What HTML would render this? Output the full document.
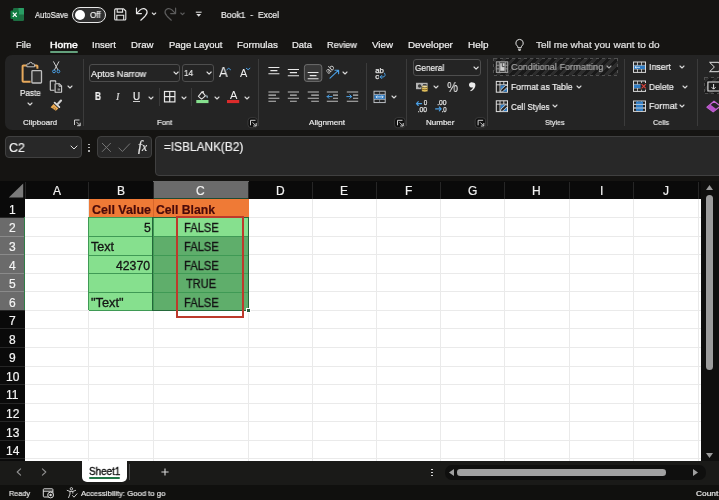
<!DOCTYPE html>
<html><head><meta charset="utf-8"><title>Book1 - Excel</title>
<style>
html,body{margin:0;padding:0;}
body{width:719px;height:500px;overflow:hidden;background:#151412;position:relative;font-family:"Liberation Sans",sans-serif;}
.t{position:absolute;white-space:pre;display:block;transform-origin:0 50%;will-change:transform;-webkit-text-stroke-width:0.2px;}
.r{position:absolute;box-sizing:border-box;display:block;}
</style></head><body>
<svg class="r" style="left:10px;top:7px;" width="15" height="15" viewBox="0 0 15 15" fill="none"><rect x="3" y="1" width="11" height="13" rx="1.2" fill="#1d6f42"/><rect x="8.5" y="1" width="5.5" height="6.5" fill="#33c481" opacity=".55"/><rect x="0.5" y="3.5" width="8.5" height="8.5" rx="1" fill="#107c41"/><path d="M2.8 5.6 L6.7 9.9 M6.7 5.6 L2.8 9.9" stroke="#fff" stroke-width="1.2"/></svg>
<span class="t" style="left:35.00px;top:9.90px;font-size:8.5px;line-height:10.20px;transform:scaleX(0.8953);color:#f0f0f0;">AutoSave</span>
<div class="r" style="left:72.3px;top:6.8px;width:33.7px;height:16.0px;background:#2e2e2e;border:1px solid #e8e8e8;border-radius:9px;"></div>
<div class="r" style="left:74.7px;top:9.6px;width:10.399999999999991px;height:10.4px;background:#ffffff;border-radius:50%;"></div>
<span class="t" style="left:89.60px;top:9.80px;font-size:8.5px;line-height:10.20px;transform:scaleX(0.9480);color:#f0f0f0;">Off</span>
<span class="t" style="left:221.00px;top:9.72px;font-size:8.8px;line-height:10.56px;transform:scaleX(0.9800);color:#f0f0f0;">Book1  -  Excel</span>
<span class="t" style="left:15.50px;top:39.46px;font-size:9.4px;line-height:11.28px;transform:scaleX(0.9903);color:#f0f0f0;">File</span>
<span class="t" style="left:49.70px;top:39.46px;font-size:9.4px;line-height:11.28px;transform:scaleX(1.1087);color:#ffffff;-webkit-text-stroke:0.45px #fff;">Home</span>
<div class="r" style="left:49.7px;top:51.1px;width:27.89999999999999px;height:1.7999999999999972px;background:#63a07c;border-radius:1px;"></div>
<span class="t" style="left:92.00px;top:39.46px;font-size:9.4px;line-height:11.28px;transform:scaleX(1.0209);color:#f0f0f0;">Insert</span>
<span class="t" style="left:131.00px;top:39.46px;font-size:9.4px;line-height:11.28px;transform:scaleX(1.0258);color:#f0f0f0;">Draw</span>
<span class="t" style="left:168.50px;top:39.46px;font-size:9.4px;line-height:11.28px;transform:scaleX(1.0135);color:#f0f0f0;">Page Layout</span>
<span class="t" style="left:237.00px;top:39.46px;font-size:9.4px;line-height:11.28px;transform:scaleX(1.0466);color:#f0f0f0;">Formulas</span>
<span class="t" style="left:292.00px;top:39.46px;font-size:9.4px;line-height:11.28px;transform:scaleX(1.0073);color:#f0f0f0;">Data</span>
<span class="t" style="left:327.00px;top:39.46px;font-size:9.4px;line-height:11.28px;transform:scaleX(0.9734);color:#f0f0f0;">Review</span>
<span class="t" style="left:372.00px;top:39.46px;font-size:9.4px;line-height:11.28px;transform:scaleX(1.0394);color:#f0f0f0;">View</span>
<span class="t" style="left:407.50px;top:39.46px;font-size:9.4px;line-height:11.28px;transform:scaleX(1.0503);color:#f0f0f0;">Developer</span>
<span class="t" style="left:467.50px;top:39.46px;font-size:9.4px;line-height:11.28px;transform:scaleX(1.0604);color:#f0f0f0;">Help</span>
<svg class="r" style="left:514px;top:37.6px;" width="11.1" height="13.9" viewBox="0 0 12 15" fill="none"><path d="M6 1.5 a4 4 0 0 1 2.4 7.2 c-.5 .5 -.6 1 -.6 1.8 h-3.6 c0 -.8 -.1 -1.3 -.6 -1.8 A4 4 0 0 1 6 1.5 z" stroke="#e6e6e6" stroke-width="1.05"/><path d="M4.4 12.2 h3.2 M4.9 13.7 h2.2" stroke="#e6e6e6" stroke-width="1.05"/></svg>
<span class="t" style="left:536.00px;top:39.46px;font-size:9.4px;line-height:11.28px;transform:scaleX(1.0690);color:#e0e0e0;">Tell me what you want to do</span>
<div class="r" style="left:5px;top:54.5px;width:725px;height:75.0px;background:#242424;border-radius:7px 0 0 7px;"></div>
<div class="r" style="left:83px;top:59px;width:1px;height:67px;background:#3b3b3b;"></div>
<div class="r" style="left:258.3px;top:59px;width:1.0px;height:67px;background:#3b3b3b;"></div>
<div class="r" style="left:366px;top:62.5px;width:1px;height:47.0px;background:#3b3b3b;"></div>
<div class="r" style="left:406.3px;top:59px;width:1.0px;height:67px;background:#3b3b3b;"></div>
<div class="r" style="left:487px;top:59px;width:1px;height:67px;background:#3b3b3b;"></div>
<div class="r" style="left:624.3px;top:59px;width:1.0px;height:67px;background:#3b3b3b;"></div>
<div class="r" style="left:697.2px;top:59px;width:1.0px;height:67px;background:#3b3b3b;"></div>
<span class="t" style="left:19.70px;top:87.66px;font-size:8.4px;line-height:10.08px;transform:scaleX(0.9683);color:#f0f0f0;">Paste</span>
<svg class="r" style="left:26.6px;top:102.2px;" width="6" height="4" viewBox="0 0 6 4" fill="none"><path d="M1 1 L3.0 3 L5 1" stroke="#d8d8d8" stroke-width="1.1" stroke-linecap="round" stroke-linejoin="round"/></svg>
<svg class="r" style="left:67.2px;top:85.0px;" width="6" height="4" viewBox="0 0 6 4" fill="none"><path d="M1 1 L3.0 3 L5 1" stroke="#d8d8d8" stroke-width="1.1" stroke-linecap="round" stroke-linejoin="round"/></svg>
<span class="t" style="left:22.70px;top:117.50px;font-size:8px;line-height:9.60px;transform:scaleX(0.9958);color:#e8e8e8;">Clipboard</span>
<span class="t" style="left:156.70px;top:117.70px;font-size:8px;line-height:9.60px;transform:scaleX(0.9558);color:#e8e8e8;">Font</span>
<span class="t" style="left:309.00px;top:117.50px;font-size:8px;line-height:9.60px;transform:scaleX(1.0120);color:#e8e8e8;">Alignment</span>
<span class="t" style="left:426.10px;top:117.50px;font-size:8px;line-height:9.60px;transform:scaleX(0.9981);color:#e8e8e8;">Number</span>
<span class="t" style="left:545.40px;top:118.20px;font-size:8px;line-height:9.60px;transform:scaleX(0.8997);color:#e8e8e8;">Styles</span>
<span class="t" style="left:652.70px;top:117.90px;font-size:8px;line-height:9.60px;transform:scaleX(0.9054);color:#e8e8e8;">Cells</span>
<div class="r" style="left:89.3px;top:64px;width:91.2px;height:17.799999999999997px;background:#242424;border:1px solid #4e4e4e;border-radius:3px;"></div>
<span class="t" style="left:91.00px;top:68.58px;font-size:9.2px;line-height:11.04px;transform:scaleX(0.9905);color:#f0f0f0;">Aptos Narrow</span>
<svg class="r" style="left:172.9px;top:71.4px;" width="6.2" height="4.2" viewBox="0 0 6.2 4.2" fill="none"><path d="M1 1 L3.1 3.2 L5.2 1" stroke="#e0e0e0" stroke-width="1.1" stroke-linecap="round" stroke-linejoin="round"/></svg>
<div class="r" style="left:182.2px;top:64px;width:31.600000000000023px;height:17.799999999999997px;background:#242424;border:1px solid #4e4e4e;border-radius:3px;"></div>
<span class="t" style="left:184.40px;top:68.42px;font-size:9.3px;line-height:11.16px;transform:scaleX(0.8604);color:#f0f0f0;">14</span>
<span class="t" style="left:219.10px;top:65.02px;font-size:13.8px;line-height:16.56px;transform:scaleX(0.9452);color:#f0f0f0;-webkit-text-stroke-width:0;">A</span>
<span class="t" style="left:239.90px;top:67.06px;font-size:10.9px;line-height:13.08px;transform:scaleX(0.9766);color:#f0f0f0;-webkit-text-stroke-width:0;">A</span>
<span class="t" style="left:229.70px;top:89.86px;font-size:10.4px;line-height:12.48px;transform:scaleX(1.0668);color:#f0f0f0;-webkit-text-stroke-width:0;">A</span>
<svg class="r" style="left:206.3px;top:71.4px;" width="6.2" height="4.2" viewBox="0 0 6.2 4.2" fill="none"><path d="M1 1 L3.1 3.2 L5.2 1" stroke="#e0e0e0" stroke-width="1.1" stroke-linecap="round" stroke-linejoin="round"/></svg>
<span class="t" style="left:95.20px;top:91.16px;font-size:10.4px;line-height:12.48px;transform:scaleX(0.7989);color:#f0f0f0;font-weight:bold;">B</span>
<span class="t" style="left:115.60px;top:91.16px;font-size:10.4px;line-height:12.48px;transform:scaleX(1.0000);color:#d8d8d8;font-style:italic;font-family:&quot;Liberation Serif&quot;,serif;">I</span>
<span class="t" style="left:133.20px;top:91.30px;font-size:10px;line-height:12.00px;transform:scaleX(0.9693);color:#f0f0f0;">U</span>
<div class="r" style="left:133.2px;top:101.2px;width:7.0px;height:1.0px;background:#d0d0d0;"></div>
<svg class="r" style="left:148.4px;top:95.7px;" width="6" height="4" viewBox="0 0 6 4" fill="none"><path d="M1 1 L3.0 3 L5 1" stroke="#d8d8d8" stroke-width="1.1" stroke-linecap="round" stroke-linejoin="round"/></svg>
<div class="r" style="left:158.8px;top:88.3px;width:1.0px;height:17.400000000000006px;background:#3b3b3b;"></div>
<div class="r" style="left:191px;top:88.3px;width:1px;height:17.400000000000006px;background:#3b3b3b;"></div>
<svg class="r" style="left:181.1px;top:95.7px;" width="6" height="4" viewBox="0 0 6 4" fill="none"><path d="M1 1 L3.0 3 L5 1" stroke="#d8d8d8" stroke-width="1.1" stroke-linecap="round" stroke-linejoin="round"/></svg>
<svg class="r" style="left:213.7px;top:95.7px;" width="6" height="4" viewBox="0 0 6 4" fill="none"><path d="M1 1 L3.0 3 L5 1" stroke="#d8d8d8" stroke-width="1.1" stroke-linecap="round" stroke-linejoin="round"/></svg>
<svg class="r" style="left:244.2px;top:95.7px;" width="6" height="4" viewBox="0 0 6 4" fill="none"><path d="M1 1 L3.0 3 L5 1" stroke="#d8d8d8" stroke-width="1.1" stroke-linecap="round" stroke-linejoin="round"/></svg>
<svg class="r" style="left:342.4px;top:71.3px;" width="6" height="4" viewBox="0 0 6 4" fill="none"><path d="M1 1 L3.0 3 L5 1" stroke="#d8d8d8" stroke-width="1.1" stroke-linecap="round" stroke-linejoin="round"/></svg>
<svg class="r" style="left:391.0px;top:95.0px;" width="6" height="4" viewBox="0 0 6 4" fill="none"><path d="M1 1 L3.0 3 L5 1" stroke="#d8d8d8" stroke-width="1.1" stroke-linecap="round" stroke-linejoin="round"/></svg>
<div class="r" style="left:413px;top:59px;width:67.80000000000001px;height:16.599999999999994px;background:#242424;border:1px solid #4e4e4e;border-radius:3px;"></div>
<span class="t" style="left:414.70px;top:62.72px;font-size:9.3px;line-height:11.16px;transform:scaleX(0.8856);color:#f0f0f0;">General</span>
<svg class="r" style="left:473.4px;top:65.5px;" width="6.2" height="4.2" viewBox="0 0 6.2 4.2" fill="none"><path d="M1 1 L3.1 3.2 L5.2 1" stroke="#e0e0e0" stroke-width="1.1" stroke-linecap="round" stroke-linejoin="round"/></svg>
<svg class="r" style="left:433.1px;top:84.8px;" width="6" height="4" viewBox="0 0 6 4" fill="none"><path d="M1 1 L3.0 3 L5 1" stroke="#d8d8d8" stroke-width="1.1" stroke-linecap="round" stroke-linejoin="round"/></svg>
<span class="t" style="left:447.20px;top:78.10px;font-size:15px;line-height:18.00px;transform:scaleX(0.8248);color:#f0f0f0;-webkit-text-stroke-width:0;">%</span>
<div class="r" style="left:493.5px;top:58.2px;width:124.5px;height:17.200000000000003px;border-radius:2px;background:repeating-linear-gradient(135deg,#2d2d2d 0 3.2px,#191919 3.2px 6.4px);"></div>
<div class="r" style="left:493.5px;top:58px;width:124.5px;height:1px;background:repeating-linear-gradient(90deg,#505050 0 3px,transparent 3px 6px);"></div>
<div class="r" style="left:493.5px;top:74.8px;width:124.5px;height:1.0px;background:repeating-linear-gradient(90deg,#505050 0 3px,transparent 3px 6px);"></div>
<div class="r" style="left:493.2px;top:58px;width:1.0px;height:17.799999999999997px;background:repeating-linear-gradient(180deg,#505050 0 3px,transparent 3px 6px);"></div>
<div class="r" style="left:617.4px;top:58px;width:1.0px;height:17.799999999999997px;background:repeating-linear-gradient(180deg,#505050 0 3px,transparent 3px 6px);"></div>
<span class="t" style="left:511.00px;top:61.44px;font-size:9.6px;line-height:11.52px;transform:scaleX(0.9557);color:#a6a6a6;">Conditional Formatting</span>
<svg class="r" style="left:605.5px;top:65.0px;" width="6" height="4" viewBox="0 0 6 4" fill="none"><path d="M1 1 L3.0 3 L5 1" stroke="#a6a6a6" stroke-width="1.1" stroke-linecap="round" stroke-linejoin="round"/></svg>
<span class="t" style="left:511.40px;top:81.34px;font-size:9.6px;line-height:11.52px;transform:scaleX(0.8973);color:#f0f0f0;">Format as Table</span>
<svg class="r" style="left:575.6px;top:84.6px;" width="6" height="4" viewBox="0 0 6 4" fill="none"><path d="M1 1 L3.0 3 L5 1" stroke="#d8d8d8" stroke-width="1.1" stroke-linecap="round" stroke-linejoin="round"/></svg>
<span class="t" style="left:511.40px;top:100.74px;font-size:9.6px;line-height:11.52px;transform:scaleX(0.8512);color:#f0f0f0;">Cell Styles</span>
<svg class="r" style="left:552.0px;top:104.0px;" width="6" height="4" viewBox="0 0 6 4" fill="none"><path d="M1 1 L3.0 3 L5 1" stroke="#d8d8d8" stroke-width="1.1" stroke-linecap="round" stroke-linejoin="round"/></svg>
<div class="r" style="left:704.8px;top:77.6px;width:20.200000000000045px;height:16.0px;border-radius:2px;background:repeating-linear-gradient(135deg,#2d2d2d 0 3.2px,#191919 3.2px 6.4px);"></div>
<div class="r" style="left:704.8px;top:77.4px;width:20.200000000000045px;height:1.0px;background:repeating-linear-gradient(90deg,#505050 0 3px,transparent 3px 6px);"></div>
<div class="r" style="left:704.8px;top:93px;width:20.200000000000045px;height:1px;background:repeating-linear-gradient(90deg,#505050 0 3px,transparent 3px 6px);"></div>
<div class="r" style="left:704.4px;top:77.4px;width:1.0px;height:16.599999999999994px;background:repeating-linear-gradient(180deg,#505050 0 3px,transparent 3px 6px);"></div>
<span class="t" style="left:648.70px;top:61.34px;font-size:9.6px;line-height:11.52px;transform:scaleX(0.9163);color:#f0f0f0;">Insert</span>
<svg class="r" style="left:679.1px;top:65.4px;" width="6" height="4" viewBox="0 0 6 4" fill="none"><path d="M1 1 L3.0 3 L5 1" stroke="#d8d8d8" stroke-width="1.1" stroke-linecap="round" stroke-linejoin="round"/></svg>
<span class="t" style="left:648.70px;top:80.84px;font-size:9.6px;line-height:11.52px;transform:scaleX(0.8865);color:#f0f0f0;">Delete</span>
<svg class="r" style="left:682.0px;top:84.9px;" width="6" height="4" viewBox="0 0 6 4" fill="none"><path d="M1 1 L3.0 3 L5 1" stroke="#d8d8d8" stroke-width="1.1" stroke-linecap="round" stroke-linejoin="round"/></svg>
<span class="t" style="left:648.70px;top:100.14px;font-size:9.6px;line-height:11.52px;transform:scaleX(0.9210);color:#f0f0f0;">Format</span>
<svg class="r" style="left:679.1px;top:104.0px;" width="6" height="4" viewBox="0 0 6 4" fill="none"><path d="M1 1 L3.0 3 L5 1" stroke="#d8d8d8" stroke-width="1.1" stroke-linecap="round" stroke-linejoin="round"/></svg>
<div class="r" style="left:0px;top:129.5px;width:719px;height:51.5px;background:#151412;"></div>
<div class="r" style="left:5px;top:136px;width:77px;height:22px;background:#282828;border:1px solid #404040;border-radius:4px;"></div>
<span class="t" style="left:9.40px;top:140.42px;font-size:12.8px;line-height:15.36px;transform:scaleX(0.9656);color:#f0f0f0;">C2</span>
<svg class="r" style="left:69.5px;top:144.9px;" width="8" height="5" viewBox="0 0 8 5" fill="none"><path d="M1 1 L4.0 4 L7 1" stroke="#e0e0e0" stroke-width="1" stroke-linecap="round" stroke-linejoin="round"/></svg>
<div class="r" style="left:88.3px;top:143.5px;width:1.6000000000000085px;height:1.5999999999999943px;background:#cfcfcf;border-radius:50%;"></div>
<div class="r" style="left:88.3px;top:146.8px;width:1.6000000000000085px;height:1.5999999999999943px;background:#cfcfcf;border-radius:50%;"></div>
<div class="r" style="left:88.3px;top:150.1px;width:1.6000000000000085px;height:1.5999999999999943px;background:#cfcfcf;border-radius:50%;"></div>
<div class="r" style="left:96.5px;top:136px;width:55.5px;height:22px;background:#282828;border:1px solid #404040;border-radius:4px;"></div>
<svg class="r" style="left:101px;top:141.5px;" width="11" height="11" viewBox="0 0 11 11" fill="none"><path d="M1 1 L9.8 9.8 M9.800 1 L1 9.800" stroke="#757575" stroke-width="1"/></svg>
<svg class="r" style="left:117px;top:141.5px;" width="14" height="11" viewBox="0 0 14 11" fill="none"><path d="M1.600 5.700 L5.400 9.500 L13 1.500" stroke="#757575" stroke-width="1"/></svg>
<span class="t" style="left:137.60px;top:138.80px;font-size:14px;line-height:16.80px;transform:scaleX(1.0000);color:#e6e6e6;font-style:italic;font-family:&quot;Liberation Serif&quot;,serif;">f</span>
<span class="t" style="left:142.30px;top:141.30px;font-size:11.5px;line-height:13.80px;transform:scaleX(1.0000);color:#e6e6e6;font-style:italic;font-family:&quot;Liberation Serif&quot;,serif;">x</span>
<div class="r" style="left:155px;top:136px;width:575px;height:40px;background:#282828;border:1px solid #404040;border-radius:4px;"></div>
<span class="t" style="left:164.00px;top:140.44px;font-size:12.6px;line-height:15.12px;transform:scaleX(0.9397);color:#f0f0f0;">=ISBLANK(B2)</span>
<div class="r" style="left:0px;top:181px;width:701.2px;height:18px;background:#0a0a0a;"></div>
<div class="r" style="left:0px;top:199px;width:25px;height:261.5px;background:#0a0a0a;"></div>
<div class="r" style="left:0px;top:217.47px;width:25px;height:92.85px;background:#6b6b6b;"></div>
<div class="r" style="left:25px;top:199px;width:676.2px;height:261.5px;background:#ffffff;"></div>
<div class="r" style="left:153px;top:181px;width:96px;height:17.400000000000006px;background:#6b6b6b;"></div>
<div class="r" style="left:153px;top:198.3px;width:96px;height:1.0px;background:#1f4a30;"></div>
<div class="r" style="left:25px;top:182px;width:1px;height:17px;background:#262626;"></div>
<div class="r" style="left:88px;top:182px;width:1px;height:17px;background:#262626;"></div>
<div class="r" style="left:153px;top:182px;width:1px;height:17px;background:#262626;"></div>
<div class="r" style="left:248px;top:182px;width:1px;height:17px;background:#262626;"></div>
<div class="r" style="left:312px;top:182px;width:1px;height:17px;background:#262626;"></div>
<div class="r" style="left:376px;top:182px;width:1px;height:17px;background:#262626;"></div>
<div class="r" style="left:440px;top:182px;width:1px;height:17px;background:#262626;"></div>
<div class="r" style="left:504px;top:182px;width:1px;height:17px;background:#262626;"></div>
<div class="r" style="left:569px;top:182px;width:1px;height:17px;background:#262626;"></div>
<div class="r" style="left:633px;top:182px;width:1px;height:17px;background:#262626;"></div>
<div class="r" style="left:698px;top:182px;width:1px;height:17px;background:#262626;"></div>
<svg class="r" style="left:8px;top:183px;" width="16" height="15" viewBox="0 0 16 15" fill="none"><path d="M15.2 0.4 V14.4 H0.8 Z" fill="#7a7a7a"/></svg>
<span class="t" style="left:52.75px;top:184.20px;font-size:12px;line-height:14.40px;transform:scaleX(1.0000);color:#f0f0f0;">A</span>
<span class="t" style="left:116.75px;top:184.20px;font-size:12px;line-height:14.40px;transform:scaleX(1.0000);color:#f0f0f0;">B</span>
<span class="t" style="left:196.42px;top:184.20px;font-size:12px;line-height:14.40px;transform:scaleX(1.0000);color:#f0f0f0;">C</span>
<span class="t" style="left:275.92px;top:184.20px;font-size:12px;line-height:14.40px;transform:scaleX(1.0000);color:#f0f0f0;">D</span>
<span class="t" style="left:340.25px;top:184.20px;font-size:12px;line-height:14.40px;transform:scaleX(1.0000);color:#f0f0f0;">E</span>
<span class="t" style="left:404.83px;top:184.20px;font-size:12px;line-height:14.40px;transform:scaleX(1.0000);color:#f0f0f0;">F</span>
<span class="t" style="left:467.83px;top:184.20px;font-size:12px;line-height:14.40px;transform:scaleX(1.0000);color:#f0f0f0;">G</span>
<span class="t" style="left:532.42px;top:184.20px;font-size:12px;line-height:14.40px;transform:scaleX(1.0000);color:#f0f0f0;">H</span>
<span class="t" style="left:599.58px;top:184.20px;font-size:12px;line-height:14.40px;transform:scaleX(1.0000);color:#f0f0f0;">I</span>
<span class="t" style="left:663.00px;top:184.20px;font-size:12px;line-height:14.40px;transform:scaleX(1.0000);color:#f0f0f0;">J</span>
<div class="r" style="left:88px;top:199px;width:1px;height:261.5px;background:#eaeaea;"></div>
<div class="r" style="left:153px;top:199px;width:1px;height:261.5px;background:#eaeaea;"></div>
<div class="r" style="left:248px;top:199px;width:1px;height:261.5px;background:#eaeaea;"></div>
<div class="r" style="left:312px;top:199px;width:1px;height:261.5px;background:#eaeaea;"></div>
<div class="r" style="left:376px;top:199px;width:1px;height:261.5px;background:#eaeaea;"></div>
<div class="r" style="left:440px;top:199px;width:1px;height:261.5px;background:#eaeaea;"></div>
<div class="r" style="left:504px;top:199px;width:1px;height:261.5px;background:#eaeaea;"></div>
<div class="r" style="left:569px;top:199px;width:1px;height:261.5px;background:#eaeaea;"></div>
<div class="r" style="left:633px;top:199px;width:1px;height:261.5px;background:#eaeaea;"></div>
<div class="r" style="left:698px;top:199px;width:1px;height:261.5px;background:#eaeaea;"></div>
<div class="r" style="left:25px;top:217px;width:676.2px;height:1px;background:#eaeaea;"></div>
<span class="t" style="left:9.06px;top:202.79px;font-size:12px;line-height:14.40px;transform:scaleX(1.0000);color:#f4f4f4;">1</span>
<div class="r" style="left:0px;top:217px;width:25px;height:1px;background:#262626;"></div>
<div class="r" style="left:25px;top:236px;width:676.2px;height:1px;background:#eaeaea;"></div>
<span class="t" style="left:9.06px;top:221.36px;font-size:12px;line-height:14.40px;transform:scaleX(1.0000);color:#f4f4f4;">2</span>
<div class="r" style="left:0px;top:236px;width:25px;height:1px;background:#8a8a8a;"></div>
<div class="r" style="left:25px;top:254px;width:676.2px;height:1px;background:#eaeaea;"></div>
<span class="t" style="left:9.06px;top:239.93px;font-size:12px;line-height:14.40px;transform:scaleX(1.0000);color:#f4f4f4;">3</span>
<div class="r" style="left:0px;top:254px;width:25px;height:1px;background:#8a8a8a;"></div>
<div class="r" style="left:25px;top:273px;width:676.2px;height:1px;background:#eaeaea;"></div>
<span class="t" style="left:9.06px;top:258.50px;font-size:12px;line-height:14.40px;transform:scaleX(1.0000);color:#f4f4f4;">4</span>
<div class="r" style="left:0px;top:273px;width:25px;height:1px;background:#8a8a8a;"></div>
<div class="r" style="left:25px;top:291px;width:676.2px;height:1px;background:#eaeaea;"></div>
<span class="t" style="left:9.06px;top:277.07px;font-size:12px;line-height:14.40px;transform:scaleX(1.0000);color:#f4f4f4;">5</span>
<div class="r" style="left:0px;top:291px;width:25px;height:1px;background:#8a8a8a;"></div>
<div class="r" style="left:25px;top:310px;width:676.2px;height:1px;background:#eaeaea;"></div>
<span class="t" style="left:9.06px;top:295.64px;font-size:12px;line-height:14.40px;transform:scaleX(1.0000);color:#f4f4f4;">6</span>
<div class="r" style="left:0px;top:310px;width:25px;height:1px;background:#262626;"></div>
<div class="r" style="left:25px;top:328px;width:676.2px;height:1px;background:#eaeaea;"></div>
<span class="t" style="left:9.06px;top:314.21px;font-size:12px;line-height:14.40px;transform:scaleX(1.0000);color:#f4f4f4;">7</span>
<div class="r" style="left:0px;top:328px;width:25px;height:1px;background:#262626;"></div>
<div class="r" style="left:25px;top:347px;width:676.2px;height:1px;background:#eaeaea;"></div>
<span class="t" style="left:9.06px;top:332.78px;font-size:12px;line-height:14.40px;transform:scaleX(1.0000);color:#f4f4f4;">8</span>
<div class="r" style="left:0px;top:347px;width:25px;height:1px;background:#262626;"></div>
<div class="r" style="left:25px;top:366px;width:676.2px;height:1px;background:#eaeaea;"></div>
<span class="t" style="left:9.06px;top:351.35px;font-size:12px;line-height:14.40px;transform:scaleX(1.0000);color:#f4f4f4;">9</span>
<div class="r" style="left:0px;top:366px;width:25px;height:1px;background:#262626;"></div>
<div class="r" style="left:25px;top:384px;width:676.2px;height:1px;background:#eaeaea;"></div>
<span class="t" style="left:5.73px;top:369.92px;font-size:12px;line-height:14.40px;transform:scaleX(1.0000);color:#f4f4f4;">10</span>
<div class="r" style="left:0px;top:384px;width:25px;height:1px;background:#262626;"></div>
<div class="r" style="left:25px;top:403px;width:676.2px;height:1px;background:#eaeaea;"></div>
<span class="t" style="left:6.17px;top:388.49px;font-size:12px;line-height:14.40px;transform:scaleX(1.0000);color:#f4f4f4;">11</span>
<div class="r" style="left:0px;top:403px;width:25px;height:1px;background:#262626;"></div>
<div class="r" style="left:25px;top:421px;width:676.2px;height:1px;background:#eaeaea;"></div>
<span class="t" style="left:5.73px;top:407.06px;font-size:12px;line-height:14.40px;transform:scaleX(1.0000);color:#f4f4f4;">12</span>
<div class="r" style="left:0px;top:421px;width:25px;height:1px;background:#262626;"></div>
<div class="r" style="left:25px;top:440px;width:676.2px;height:1px;background:#eaeaea;"></div>
<span class="t" style="left:5.73px;top:425.62px;font-size:12px;line-height:14.40px;transform:scaleX(1.0000);color:#f4f4f4;">13</span>
<div class="r" style="left:0px;top:440px;width:25px;height:1px;background:#262626;"></div>
<div class="r" style="left:25px;top:458px;width:676.2px;height:1px;background:#eaeaea;"></div>
<span class="t" style="left:5.73px;top:444.20px;font-size:12px;line-height:14.40px;transform:scaleX(1.0000);color:#f4f4f4;">14</span>
<div class="r" style="left:0px;top:458px;width:25px;height:1px;background:#262626;"></div>
<div class="r" style="left:24px;top:217.47px;width:1.1999999999999993px;height:92.85px;background:#2f7d46;"></div>
<div class="r" style="left:88.5px;top:199px;width:160.2px;height:18.47px;background:#ef7a36;"></div>
<div class="r" style="left:152.5px;top:199px;width:1.0px;height:18.47px;background:#d8662a;"></div>
<div class="r" style="left:88.5px;top:217.47px;width:64.5px;height:92.85px;background:#86e08e;"></div>
<div class="r" style="left:153px;top:217.47px;width:95.19999999999999px;height:92.85px;background:#5fae6b;"></div>
<div class="r" style="left:154px;top:218.47px;width:93.5px;height:17.07000000000002px;background:#86e08e;"></div>
<div class="r" style="left:88.5px;top:216.5px;width:160.0px;height:1.0px;background:#3f9a55;"></div>
<div class="r" style="left:88.5px;top:235.5px;width:160.0px;height:1.0px;background:#3f9a55;"></div>
<div class="r" style="left:88.5px;top:254.5px;width:160.0px;height:1.0px;background:#3f9a55;"></div>
<div class="r" style="left:88.5px;top:272.5px;width:160.0px;height:1.0px;background:#3f9a55;"></div>
<div class="r" style="left:88.5px;top:291.5px;width:160.0px;height:1.0px;background:#3f9a55;"></div>
<div class="r" style="left:88.5px;top:309.5px;width:160.0px;height:1.0px;background:#3f9a55;"></div>
<div class="r" style="left:87.5px;top:217.47px;width:1.0px;height:92.85px;background:#3f9a55;"></div>
<div class="r" style="left:152.5px;top:217.47px;width:1.0px;height:92.85px;background:#3f9a55;"></div>
<div class="r" style="left:247.5px;top:217.47px;width:1.0px;height:92.85px;background:#3f9a55;"></div>
<div class="r" style="left:152.3px;top:216.67px;width:96.39999999999998px;height:94.35px;border:1.3px solid #24683a;"></div>
<div class="r" style="left:245.9px;top:308.12px;width:4.099999999999994px;height:4.199999999999989px;background:#2a5e3e;border:0.8px solid #fff;box-sizing:content-box;width:3px;height:3px;"></div>
<span class="t" style="left:91.60px;top:202.79px;font-size:12px;line-height:14.40px;transform:scaleX(1.0406);color:#4a0a0a;font-weight:bold;">Cell Value</span>
<span class="t" style="left:156.00px;top:202.79px;font-size:12px;line-height:14.40px;transform:scaleX(1.0169);color:#4a0a0a;font-weight:bold;">Cell Blank</span>
<span class="t" style="left:143.69px;top:221.36px;font-size:12px;line-height:14.40px;transform:scaleX(1.0200);color:#141414;-webkit-text-stroke:0.3px #141414;">5</span>
<span class="t" style="left:91.00px;top:239.93px;font-size:12px;line-height:14.40px;transform:scaleX(1.0451);color:#141414;-webkit-text-stroke:0.3px #141414;">Text</span>
<span class="t" style="left:116.46px;top:258.50px;font-size:12px;line-height:14.40px;transform:scaleX(1.0200);color:#141414;-webkit-text-stroke:0.3px #141414;">42370</span>
<span class="t" style="left:91.00px;top:295.64px;font-size:12px;line-height:14.40px;transform:scaleX(1.0646);color:#141414;-webkit-text-stroke:0.3px #141414;">"Text"</span>
<span class="t" style="left:183.80px;top:221.36px;font-size:12px;line-height:14.40px;transform:scaleX(0.9316);color:#141414;-webkit-text-stroke:0.3px #141414;">FALSE</span>
<span class="t" style="left:183.80px;top:239.93px;font-size:12px;line-height:14.40px;transform:scaleX(0.9316);color:#141414;-webkit-text-stroke:0.3px #141414;">FALSE</span>
<span class="t" style="left:183.80px;top:258.50px;font-size:12px;line-height:14.40px;transform:scaleX(0.9316);color:#141414;-webkit-text-stroke:0.3px #141414;">FALSE</span>
<span class="t" style="left:186.00px;top:277.07px;font-size:12px;line-height:14.40px;transform:scaleX(0.9184);color:#141414;-webkit-text-stroke:0.3px #141414;">TRUE</span>
<span class="t" style="left:183.80px;top:295.64px;font-size:12px;line-height:14.40px;transform:scaleX(0.9316);color:#141414;-webkit-text-stroke:0.3px #141414;">FALSE</span>
<div class="r" style="left:176.4px;top:216.2px;width:67.69999999999999px;height:102.30000000000001px;border:2.6px solid #bd3a2c;"></div>
<div class="r" style="left:701.2px;top:181px;width:17.799999999999955px;height:279.5px;background:#0f0f0e;"></div>
<svg class="r" style="left:705px;top:184px;" width="9" height="7" viewBox="0 0 9 7" fill="none"><path d="M4.5 1 L8 6 H1 Z" fill="#9a9a9a"/></svg>
<div class="r" style="left:706px;top:195px;width:6.5px;height:175px;background:#9c9c9c;border-radius:3.5px;"></div>
<svg class="r" style="left:705px;top:451.8px;" width="9" height="7" viewBox="0 0 9 7" fill="none"><path d="M4.5 6 L8 1 H1 Z" fill="#9a9a9a"/></svg>
<div class="r" style="left:0px;top:460.5px;width:719px;height:24.0px;background:#1a1a18;"></div>
<svg class="r" style="left:15px;top:466.7px;" width="8" height="10" viewBox="0 0 8 10" fill="none"><path d="M5.6 1.800 L2.200 5 L5.600 8.200" stroke="#909090" stroke-width="1.1" stroke-linecap="round" stroke-linejoin="round"/></svg>
<svg class="r" style="left:40px;top:466.7px;" width="8" height="10" viewBox="0 0 8 10" fill="none"><path d="M2.400 1.800 L5.800 5 L2.400 8.200" stroke="#909090" stroke-width="1.1" stroke-linecap="round" stroke-linejoin="round"/></svg>
<div class="r" style="left:82.4px;top:460.5px;width:44.39999999999999px;height:21.100000000000023px;background:#ffffff;border-radius:0 0 5px 5px;"></div>
<span class="t" style="left:88.90px;top:465.12px;font-size:10.8px;line-height:12.96px;transform:scaleX(0.9144);color:#111;-webkit-text-stroke:0.4px #111;">Sheet1</span>
<div class="r" style="left:88.9px;top:477.4px;width:31.299999999999997px;height:1.8000000000000114px;background:#217346;border-radius:1px;"></div>
<div class="r" style="left:129px;top:464px;width:1px;height:16px;background:#4a4a4a;"></div>
<svg class="r" style="left:159.8px;top:466.7px;" width="10" height="10" viewBox="0 0 10 10" fill="none"><path d="M5 1.400 V8.600 M1.400 5 H8.600" stroke="#d8d8d8" stroke-width="1.1"/></svg>
<div class="r" style="left:431.4px;top:468.5px;width:1.6000000000000227px;height:1.6000000000000227px;background:#f4f4f4;border-radius:50%;"></div>
<div class="r" style="left:431.4px;top:471.7px;width:1.6000000000000227px;height:1.6000000000000227px;background:#f4f4f4;border-radius:50%;"></div>
<div class="r" style="left:431.4px;top:474.9px;width:1.6000000000000227px;height:1.6000000000000227px;background:#f4f4f4;border-radius:50%;"></div>
<div class="r" style="left:444.5px;top:465px;width:261.5px;height:15px;background:#0f0f0e;border-radius:7px;"></div>
<svg class="r" style="left:448px;top:468px;" width="7" height="9" viewBox="0 0 7 9" fill="none"><path d="M1 4.5 L6 1 V8 Z" fill="#a0a0a0"/></svg>
<div class="r" style="left:456.8px;top:469.2px;width:209.40000000000003px;height:6.400000000000034px;background:#a2a2a2;border-radius:3.3px;"></div>
<svg class="r" style="left:692px;top:468px;" width="7" height="9" viewBox="0 0 7 9" fill="none"><path d="M6 4.5 L1 1 V8 Z" fill="#a0a0a0"/></svg>
<div class="r" style="left:0px;top:484.5px;width:719px;height:15.5px;background:#10100e;"></div>
<span class="t" style="left:8.60px;top:488.80px;font-size:8px;line-height:9.60px;transform:scaleX(0.9038);color:#e8e8e8;">Ready</span>
<span class="t" style="left:80.70px;top:488.80px;font-size:8px;line-height:9.60px;transform:scaleX(0.9624);color:#e8e8e8;">Accessibility: Good to go</span>
<span class="t" style="left:696.40px;top:488.80px;font-size:8px;line-height:9.60px;transform:scaleX(1.0437);color:#e8e8e8;">Count:</span>
<svg class="r" style="left:0;top:0" width="719" height="500" viewBox="0 0 719 500" fill="none"><path d="M26.6 65.400 H23.400 a.8 .8 0 0 0 -.8 .8 V81 a.8 .8 0 0 0 .8 .8 H30.600 M34.600 65.400 H36.600 a.8 .8 0 0 1 .8 .8 V68.800" stroke="#e6a95c" stroke-width="2"/>
<path d="M26.800 66.800 V64.600 a.7 .7 0 0 1 .7 -.7 H29.100 a1.600 1.600 0 0 1 3.200 0 H33.900 a.7 .7 0 0 1 .7 .7 V66.800 Z" stroke="#c4c4c4" stroke-width="1" fill="#242424"/>
<rect x="31.900" y="70.600" width="9.600" height="12.400" rx=".8" fill="#303030" stroke="#c0c0c0" stroke-width="1.300"/>
<path d="M53.400 61.400 L58 70 M59 61.400 L54.400 70" stroke="#d0d0d0" stroke-width="1"/>
<circle cx="54" cy="71.400" r="1.400" stroke="#4aa0e6" stroke-width="1"/><circle cx="58.400" cy="71.400" r="1.400" stroke="#4aa0e6" stroke-width="1"/>
<path d="M54.500 90.200 H50.700 a.4 .4 0 0 1 -.4 -.4 V81.300 a.4 .4 0 0 1 .4 -.4 H55.300 a.4 .4 0 0 1 .4 .4 V82.800" stroke="#d2d2d2" stroke-width="1.100"/>
<path d="M55.500 83.700 H59.300 L61.600 86 V91.900 a.4 .4 0 0 1 -.4 .4 H55.500 a.4 .4 0 0 1 -.4 -.4 V84.100 a.4 .4 0 0 1 .4 -.4 Z" stroke="#d2d2d2" stroke-width="1.100"/><path d="M59 83.900 V86.300 H61.400" stroke="#d2d2d2" stroke-width=".9"/><path d="M57.600 88.400 h2.600 v2.200 h-2.600 z" fill="#8c8c8c"/>
<path d="M61 100.600 L58 103.800" stroke="#cfcfcf" stroke-width="2.200" stroke-linecap="round"/>
<path d="M54.600 102.600 L59.400 107.200" stroke="#e0e0e0" stroke-width="1.700" stroke-linecap="round"/>
<path d="M53.600 104 L50.600 107.200 L55.800 110.800 L58.400 108.400 Z" fill="#ecaa52"/>
<path d="M52.800 108.700 l1.400 -1.400 M54.600 109.900 l1.400 -1.400" stroke="#242424" stroke-width=".6"/>
<path d="M79.5 120.0 H74.5 V125.0" stroke="#cfcfcf" stroke-width="1"/><path d="M76.6 122.1 L80 125.5 M80.2 122.7 V125.7 H77.2" stroke="#cfcfcf" stroke-width="1"/>
<path d="M226.900 69.700 L228.700 68.300 L230.500 69.700" stroke="#4aa0e6" stroke-width="1" stroke-linecap="round" stroke-linejoin="round"/>
<path d="M246.300 68.300 L248.100 69.700 L249.900 68.300" stroke="#4aa0e6" stroke-width="1" stroke-linecap="round" stroke-linejoin="round"/>
<rect x="164.5" y="91.5" width="10.4" height="10.4" stroke="#e8e8e8" stroke-width="1.2"/><path d="M169.7 91.5 V101.9 M164.5 96.7 H174.9" stroke="#e8e8e8" stroke-width="1.2"/>
<path d="M202.200 91.600 L205.400 95.800 L201.600 99.200 L198.400 96.400 Z" stroke="#e2e2e2" stroke-width="1.100" stroke-linejoin="round"/><path d="M203.400 91 L203 93.400" stroke="#e2e2e2" stroke-width="1"/><path d="M206.800 94.600 q1.500 2 .7 3.600 q-1.700 -.6 -.7 -3.600" fill="#b8d4e4"/>
<rect x="196.3" y="100" width="12.2" height="3.1" fill="#86e08e"/>
<rect x="227" y="100" width="12.2" height="3.1" fill="#dc2b2b"/>
<rect x="248" y="117.7" width="9.4" height="10" rx="3" fill="#101010" stroke="#484848" stroke-width=".7"/>
<path d="M255.5 120.3 H250.5 V125.3" stroke="#cfcfcf" stroke-width="1"/><path d="M252.6 122.39999999999999 L256 125.8 M256.2 123.0 V126.0 H253.2" stroke="#cfcfcf" stroke-width="1"/>
<path d="M268.4 67.5 H279.4 M270.4 70.6 H277.4 M268.4 73.7 H279.4 " stroke="#e8e8e8" stroke-width="1.1"/>
<path d="M287.8 69.5 H299 M289.8 72.6 H297 M287.8 75.7 H299 " stroke="#e8e8e8" stroke-width="1.1"/>
<rect x="304.4" y="64.6" width="17.4" height="16.8" rx="2.5" fill="#383838" stroke="#6e6e6e" stroke-width="1"/>
<path d="M307.7 72.5 H318.5 M309.7 75.6 H316.5 M307.7 78.7 H318.5 " stroke="#e8e8e8" stroke-width="1.1"/>
<path d="M268.4 92 H279.4 M268.4 95.1 H276 M268.4 98.2 H279.4 M268.4 101.3 H276 " stroke="#bdbdbd" stroke-width="1.1"/>
<path d="M287.8 92 H299 M290 95.1 H296.8 M287.8 98.2 H299 M290 101.3 H296.8 " stroke="#bdbdbd" stroke-width="1.1"/>
<path d="M307.7 92 H318.9 M311.2 95.1 H318.9 M307.7 98.2 H318.9 M311.2 101.3 H318.9 " stroke="#bdbdbd" stroke-width="1.1"/>
<path d="M326.8 92 H338 M333 95.1 H338 M333 98.2 H338 M326.8 101.3 H338 " stroke="#bdbdbd" stroke-width="1.1"/>
<path d="M332 96.6 H327.2 M329 94.8 L327.2 96.6 L329 98.4" stroke="#4aa0e6" stroke-width="1" stroke-linecap="round" stroke-linejoin="round"/>
<path d="M346.8 92 H358.2 M353 95.1 H358.2 M353 98.2 H358.2 M346.8 101.3 H358.2 " stroke="#bdbdbd" stroke-width="1.1"/>
<path d="M346.8 96.6 H351.6 M349.8 94.8 L351.6 96.6 L349.8 98.4" stroke="#4aa0e6" stroke-width="1" stroke-linecap="round" stroke-linejoin="round"/>
<path d="M330 78.2 L338.4 70.4 M335 70.2 H338.6 V73.8" stroke="#4aa0e6" stroke-width="1.1" stroke-linecap="round" stroke-linejoin="round"/>
<text x="0" y="0" transform="translate(328.6 74.2) rotate(-45)" font-family="Liberation Sans, sans-serif" font-size="8" fill="#e0e0e0">ab</text>
<text x="375.2" y="73.4" font-family="Liberation Sans, sans-serif" font-size="7.8" fill="#e6e6e6" stroke="#e6e6e6" stroke-width=".25">ab</text><text x="375.2" y="79.2" font-family="Liberation Sans, sans-serif" font-size="7.8" fill="#e6e6e6" stroke="#e6e6e6" stroke-width=".25">c</text>
<path d="M384.6 73.2 q1.6 3.4 -1.6 3.8 H380.2 M381.8 75.4 L380.2 77 L381.8 78.6" stroke="#4aa0e6" stroke-width="1" stroke-linecap="round" stroke-linejoin="round"/>
<rect x="374" y="91.200" width="11.200" height="11.400" stroke="#c8ccd2" stroke-width=".9"/>
<rect x="374.400" y="94.600" width="10.400" height="4.600" fill="#2f7cc4"/><path d="M376 96.900 H383.200 M377.300 95.600 L376 96.900 L377.300 98.200 M381.900 95.600 L383.200 96.900 L381.900 98.200" stroke="#e8f2ff" stroke-width=".8"/>
<path d="M374 94.400 H385.200 M374 99.400 H385.200" stroke="#c8ccd2" stroke-width=".7"/><path d="M379.600 91.200 V94.400 M379.600 99.400 V102.600" stroke="#9aa0a8" stroke-width=".7"/>
<rect x="394.6" y="117.7" width="10.4" height="10" rx="3" fill="#101010" stroke="#484848" stroke-width=".7"/>
<path d="M402.5 120.3 H397.5 V125.3" stroke="#cfcfcf" stroke-width="1"/><path d="M399.6 122.39999999999999 L403 125.8 M403.2 123.0 V126.0 H400.2" stroke="#cfcfcf" stroke-width="1"/>
<rect x="416" y="82.800" width="11.6" height="6.4" fill="#b4b4b4"/><circle cx="419.6" cy="86" r="1.700" fill="#3a3a3a"/><path d="M423 84.500 h3.500" stroke="#3a3a3a" stroke-width=".9"/>
<path d="M421.700 86.600 h6.200 v4.300 a3.100 1.100 0 0 1 -6.200 0 Z" fill="#e9c660" stroke="#242424" stroke-width=".6"/><ellipse cx="424.800" cy="86.600" rx="3.100" ry="1.100" fill="#f8e29a" stroke="#242424" stroke-width=".5"/><path d="M421.700 88.600 a3.100 1.100 0 0 0 6.200 0" stroke="#6a4e10" stroke-width=".7"/>
<path d="M472.700 82.400 a2.700 2.700 0 0 1 2.700 2.900 c0 2.600 -1.800 4.700 -4.600 6 l-.6 -.9 c1.700 -1 2.600 -2 2.800 -3.200 a2.700 2.700 0 1 1 -.3 -4.800 Z" fill="#ececec"/>
<text x="423.7" y="105.4" font-family="Liberation Sans, sans-serif" font-size="7.3" fill="#e2e2e2" stroke="#e2e2e2" stroke-width=".25" textLength="3.5" lengthAdjust="spacingAndGlyphs">0</text>
<text x="417.7" y="111.6" font-family="Liberation Sans, sans-serif" font-size="7.3" fill="#e2e2e2" stroke="#e2e2e2" stroke-width=".25" textLength="9.4" lengthAdjust="spacingAndGlyphs">.00</text>
<path d="M421.600 103.600 H416.400 M418.300 101.700 L416.400 103.600 L418.300 105.500" stroke="#4aa0e6" stroke-width="1.100" stroke-linecap="round" stroke-linejoin="round"/>
<text x="437.2" y="105.4" font-family="Liberation Sans, sans-serif" font-size="7.3" fill="#e2e2e2" stroke="#e2e2e2" stroke-width=".25" textLength="9.4" lengthAdjust="spacingAndGlyphs">.00</text>
<text x="441.7" y="111.6" font-family="Liberation Sans, sans-serif" font-size="7.3" fill="#e2e2e2" stroke="#e2e2e2" stroke-width=".25" textLength="5" lengthAdjust="spacingAndGlyphs">.0</text>
<path d="M435.600 108.900 H441.200 M439.300 107 L441.200 108.900 L439.300 110.800" stroke="#4aa0e6" stroke-width="1.100" stroke-linecap="round" stroke-linejoin="round"/>
<rect x="475.2" y="117.7" width="10.4" height="10" rx="3" fill="#101010" stroke="#484848" stroke-width=".7"/>
<path d="M483.1 120.3 H478.1 V125.3" stroke="#cfcfcf" stroke-width="1"/><path d="M480.20000000000005 122.39999999999999 L483.6 125.8 M483.8 123.0 V126.0 H480.8" stroke="#cfcfcf" stroke-width="1"/>
<rect x="496.3" y="61.800" width="11.4" height="10.600" stroke="#a4a4a4" stroke-width="1" fill="#3a3a3a"/><path d="M499.400 61.800 V72.400 M505.300 61.800 V72.400 M496.300 65.300 H499.400 M496.300 68.800 H499.400 M505.300 65.300 H507.700 M505.300 68.800 H507.700" stroke="#a4a4a4" stroke-width=".8"/><path d="M500.200 63.200 H504.600 V70.800 H500.200 Z" fill="#d0d0d0"/><path d="M502.300 63.200 V66.600 H504.600" stroke="#3a3a3a" stroke-width=".9"/>
<rect x="496.3" y="81.4" width="11.2" height="10.8" stroke="#e0e0e0" stroke-width="1"/><path d="M496.3 84.80000000000001 H507.5 M500 81.4 V92.2 M503.8 81.4 V84.80000000000001" stroke="#e0e0e0" stroke-width=".9"/>
<path d="M500.6 85.4 H507 V91.7 H500.6 Z" fill="#2f7cc4"/>
<path d="M500.2 92.2 L501 89.60000000000001 L506 85.0 L507.8 86.80000000000001 L502.8 91.60000000000001 Z" fill="#242424" stroke="#e0e0e0" stroke-width=".8" stroke-linejoin="round"/>
<rect x="496.3" y="100.8" width="11.2" height="10.8" stroke="#e0e0e0" stroke-width="1"/><path d="M496.3 104.2 H507.5 M500 100.8 V111.6 M503.8 100.8 V104.2" stroke="#e0e0e0" stroke-width=".9"/>
<path d="M500.6 104.8 H507 V111.1 H500.6 Z" fill="#2f7cc4"/>
<path d="M500.2 111.6 L501 109.0 L506 104.39999999999999 L507.8 106.2 L502.8 111.0 Z" fill="#242424" stroke="#e0e0e0" stroke-width=".8" stroke-linejoin="round"/>
<rect x="633.5" y="62" width="12" height="10.4" stroke="#d8d8d8" stroke-width="1"/><path d="M633.5 65.4 H645.5 M633.5 69 H645.5 M637.5 62 V72.4 M641.5 62 V72.4" stroke="#d8d8d8" stroke-width=".8"/>
<rect x="634" y="65.6" width="11" height="3.4" fill="#2f7cc4"/><path d="M640 67.3 H635 M636.4 66 L635 67.3 L636.4 68.6" stroke="#e8f2ff" stroke-width=".8"/>
<rect x="633.5" y="81" width="12" height="10.4" stroke="#d8d8d8" stroke-width="1"/><path d="M633.5 84.4 H645.5 M633.5 88 H645.5 M637.5 81 V91.4 M641.5 81 V91.4" stroke="#d8d8d8" stroke-width=".8"/>
<rect x="634" y="84.6" width="7" height="3.4" fill="#2f7cc4"/><rect x="640.6" y="83" width="6" height="6.6" fill="#242424"/><path d="M641.6 84.2 L645.8 88.4 M645.8 84.2 L641.6 88.4" stroke="#e0443e" stroke-width="1.1"/>
<rect x="633.5" y="101" width="12" height="10.4" stroke="#d8d8d8" stroke-width="1"/><path d="M633.5 104.4 H645.5 M633.5 108 H645.5 M637.5 101 V111.4 M641.5 101 V111.4" stroke="#d8d8d8" stroke-width=".8"/>
<rect x="636" y="101.5" width="7" height="9.4" fill="#2f7cc4"/><path d="M633.5 104.4 H645.5 M633.5 108 H645.5" stroke="#d8d8d8" stroke-width=".8"/>
<path d="M718.500 63.200 V62.300 H709.600 L714.400 67 L709.600 71.700 H718.500 V70.800" stroke="#e6e6e6" stroke-width="1" stroke-linejoin="round"/>
<path d="M720 82 H707.900 V91 H720" stroke="#e4e4e4" stroke-width="1.1" fill="#1c1c1c"/><path d="M713.600 84 V89 M711.600 87.200 L713.600 89.200 L715.600 87.200" stroke="#e4e4e4" stroke-width="1"/>
<path d="M707 107.200 L714 101.200 L720.500 106.200 L713.200 111.800 Z" stroke="#c86ad8" stroke-width="1.2" stroke-linejoin="round"/><path d="M707 107.200 L710.300 104.400 L716.600 109.200 L713.200 111.800 Z" fill="#b653c8"/>
<rect x="43.3" y="488.8" width="9.6" height="8.2" rx=".8" stroke="#dcdcdc" stroke-width="1"/><path d="M43.3 491.2 H52.9" stroke="#dcdcdc" stroke-width="1"/><circle cx="50.6" cy="495" r="2.9" fill="#10100e" stroke="#dcdcdc" stroke-width="1"/><circle cx="50.6" cy="495" r="1.2" fill="#dcdcdc"/>
<circle cx="71.4" cy="488.8" r="1.2" stroke="#dcdcdc" stroke-width=".9"/><path d="M67.2 490.4 L70 491.4 H72.8 L75.6 490.4 M70 491.4 V494 L68.6 497.6 M72.8 491.4 V493.2" stroke="#dcdcdc" stroke-width=".9" stroke-linecap="round" stroke-linejoin="round"/><path d="M72.6 495.6 L74 497.2 L77 493.8" stroke="#dcdcdc" stroke-width=".9" stroke-linecap="round" stroke-linejoin="round"/>
<path d="M136.5 8.2 V13.6 H141.4" stroke="#e8e8e8" stroke-width="1.2" stroke-linecap="round" stroke-linejoin="round"/><path d="M136.7 13.4 L140.2 9.9 C142.6 7.6 146 8.4 146.9 11 C147.6 13.2 146.4 14.8 145 16.2 L140.8 20.2" stroke="#e8e8e8" stroke-width="1.2" stroke-linecap="round"/>
<path d="M175.6 8.2 V13.6 H170.7" stroke="#5c5c5c" stroke-width="1.2" stroke-linecap="round" stroke-linejoin="round"/><path d="M175.4 13.4 L171.9 9.9 C169.500 7.6 166.1 8.4 165.2 11 C164.500 13.2 165.7 14.8 167.1 16.2 L171.3 20.2" stroke="#5c5c5c" stroke-width="1.2" stroke-linecap="round"/>
<path d="M152.3 13 L154 14.7 L155.7 13" stroke="#e0e0e0" stroke-width="1.1" stroke-linecap="round" stroke-linejoin="round"/>
<path d="M180.8 13 L182.500 14.7 L184.2 13" stroke="#5c5c5c" stroke-width="1.1" stroke-linecap="round" stroke-linejoin="round"/>
<path d="M195.800 12.2 H201.6" stroke="#e0e0e0" stroke-width="1.100"/><path d="M196.300 14 H201.100 L198.700 16.700 Z" fill="#e0e0e0"/>
<path d="M114.7 9.9 a1 1 0 0 1 1 -1 H123.6 L125.8 11 V19 a1 1 0 0 1 -1 1 H115.700 a1 1 0 0 1 -1 -1 Z" stroke="#e8e8e8" stroke-width="1.100" stroke-linejoin="round"/><path d="M117.200 9 V12.100 H122.600 V9 M116.800 19.900 V15.200 H123.700 V19.900" stroke="#e8e8e8" stroke-width="1.100"/></svg>
</body></html>
